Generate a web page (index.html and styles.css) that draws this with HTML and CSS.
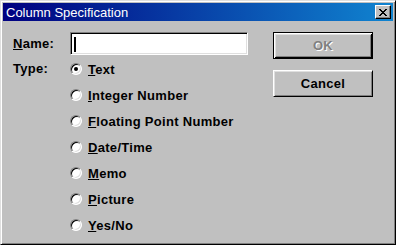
FILE: index.html
```html
<!DOCTYPE html>
<html lang="en">
<head>
    <meta charset="UTF-8">
    <title>Column Specification</title>
    <link rel="stylesheet" href="styles.css">
</head>
<body>
    <div class="window">
        <div class="titlebar">
            <span class="title">Column Specification</span>
            <button class="close" aria-label="Close">
                <svg width="8" height="7" viewBox="0 0 8 7"><path d="M0 0h2v1h1v1h2v-1h1v-1h2v1h-1v1h-1v1h-1v1h1v1h1v1h1v1h-2v-1h-1v-1h-2v1h-1v1h-2v-1h1v-1h1v-1h1v-1h-1v-1h-1v-1h-1z" fill="#000"/></svg>
            </button>
        </div>
        <div class="content">
            <div class="form">
                <div class="row">
                    <label class="label"><u>N</u>ame:</label>
                    <div class="input"><span class="caret"></span></div>
                </div>
                <div class="types">
                    <span class="label type-label">Type:</span>
                    <div class="options">
                        <div class="opt"><span class="radio checked"></span><span><u>T</u>ext</span></div>
                        <div class="opt"><span class="radio"></span><span><u>I</u>nteger Number</span></div>
                        <div class="opt"><span class="radio"></span><span><u>F</u>loating Point Number</span></div>
                        <div class="opt"><span class="radio"></span><span><u>D</u>ate/Time</span></div>
                        <div class="opt"><span class="radio"></span><span><u>M</u>emo</span></div>
                        <div class="opt"><span class="radio"></span><span><u>P</u>icture</span></div>
                        <div class="opt"><span class="radio"></span><span><u>Y</u>es/No</span></div>
                    </div>
                </div>
            </div>
            <div class="buttons">
                <button class="btn default" disabled>OK</button>
                <button class="btn">Cancel</button>
            </div>
        </div>
    </div>
</body>
</html>
```

FILE: styles.css
```css
body {
    margin: 0;
    background: #c0c0c0;
    font-family: "Liberation Sans", Arial, sans-serif;
    font-size: 13px;
    font-weight: bold;
    letter-spacing: 0.3px;
    color: #000;
}

.window {
    width: 396px;
    height: 245px;
    box-sizing: border-box;
    background: #c0c0c0;
    border: 1px solid;
    border-color: #dfdfdf #000 #000 #dfdfdf;
    box-shadow: inset 1px 1px #fff, inset -1px -1px #808080;
    padding: 2px;
    display: flex;
    flex-direction: column;
}

.titlebar {
    height: 18px;
    display: flex;
    align-items: center;
    justify-content: space-between;
    padding: 0 2px 0 3px;
    background: linear-gradient(to right, #000080, #1084d0);
}

.title {
    color: #fff;
    font-weight: normal;
    font-size: 13px;
    letter-spacing: 0;
}

.close {
    width: 16px;
    height: 14px;
    padding: 0;
    box-sizing: border-box;
    background: #c0c0c0;
    border: 1px solid;
    border-color: #fff #000 #000 #fff;
    box-shadow: inset -1px -1px #808080;
    display: flex;
    align-items: center;
    justify-content: center;
}

.content {
    display: flex;
    padding: 11px 0 0 10px;
}

.form {
    width: 235px;
}

.row {
    display: flex;
    align-items: center;
    height: 23px;
}

.label {
    width: 57px;
    flex: none;
}

.input {
    width: 179px;
    height: 23px;
    box-sizing: border-box;
    background: #fff;
    border: 1px solid;
    border-color: #808080 #fff #fff #808080;
    box-shadow: inset 1px 1px #000, inset -1px -1px #dfdfdf;
    padding: 4px 0 0 3px;
}

.caret {
    display: block;
    width: 2px;
    height: 15px;
    background: #000;
}

.types {
    display: flex;
    margin-top: 1px;
}

.type-label {
    line-height: 26px;
}

.opt {
    height: 26px;
    display: flex;
    align-items: center;
    gap: 6px;
}

.radio {
    width: 12px;
    height: 12px;
    box-sizing: border-box;
    border-radius: 50%;
    background: #fff;
    border: 1px solid;
    border-color: #808080 #fff #fff #808080;
    box-shadow: inset 1px 1px #000, inset -1px -1px #dfdfdf;
    display: flex;
    align-items: center;
    justify-content: center;
}

.radio.checked::after {
    content: '';
    width: 4px;
    height: 4px;
    border-radius: 50%;
    background: #000;
}

.buttons {
    display: flex;
    flex-direction: column;
    gap: 11px;
    margin-left: 25px;
}

.btn {
    width: 100px;
    height: 27px;
    box-sizing: border-box;
    font: inherit;
    letter-spacing: inherit;
    color: #000;
    background: #c0c0c0;
    border: 1px solid;
    border-color: #fff #000 #000 #fff;
    box-shadow: inset 1px 1px #dfdfdf, inset -1px -1px #808080;
    padding: 0;
}

.btn.default {
    border: 1px solid #000;
    box-shadow: inset 1px 1px #fff, inset -1px -1px #000, inset 2px 2px #dfdfdf, inset -2px -2px #808080;
}

.btn:disabled {
    color: #808080;
    text-shadow: 1px 1px #fff;
}
```
